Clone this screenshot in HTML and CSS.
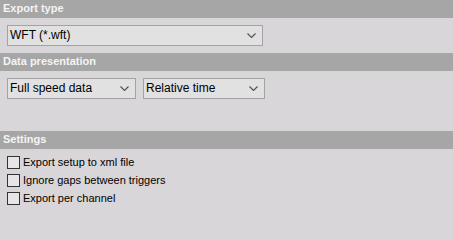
FILE: index.html
```html
<!DOCTYPE html>
<html>
<head>
<meta charset="utf-8">
<link rel="stylesheet" href="styles.css">
</head>
<body>
<div class="panel">
  <div class="hdr">Export type</div>
  <div class="sec sec1">
    <div class="sel w-wide"><span>WFT (*.wft)</span><svg class="chev" width="9" height="5" viewBox="0 0 9 5"><polyline points="0.5,0.5 4.5,4.5 8.5,0.5" fill="none" stroke="#505050" stroke-width="1.1"/></svg></div>
  </div>
  <div class="hdr">Data presentation</div>
  <div class="sec sec2">
    <div class="row">
      <div class="sel w-a"><span>Full speed data</span><svg class="chev" width="9" height="5" viewBox="0 0 9 5"><polyline points="0.5,0.5 4.5,4.5 8.5,0.5" fill="none" stroke="#505050" stroke-width="1.1"/></svg></div>
      <div class="sel w-b"><span>Relative time</span><svg class="chev" width="9" height="5" viewBox="0 0 9 5"><polyline points="0.5,0.5 4.5,4.5 8.5,0.5" fill="none" stroke="#505050" stroke-width="1.1"/></svg></div>
    </div>
  </div>
  <div class="hdr">Settings</div>
  <div class="sec sec3">
    <label class="chk"><span class="box"></span><span class="lbl">Export setup to xml file</span></label>
    <label class="chk"><span class="box"></span><span class="lbl">Ignore gaps between triggers</span></label>
    <label class="chk"><span class="box"></span><span class="lbl">Export per channel</span></label>
  </div>
</div>
</body>
</html>
```
FILE: styles.css
```css
html, body {
  margin: 0;
  padding: 0;
  background: #d8d6d8;
}
.panel {
  width: 453px;
  height: 206px;
  overflow: hidden;
  font-family: "Liberation Sans", Arial, sans-serif;
}
.hdr {
  height: 18px;
  line-height: 17px;
  background: #a6a6a6;
  color: #f4f4f4;
  font-weight: bold;
  font-size: 11px;
  padding-left: 3px;
}
.sec {
  box-sizing: border-box;
  padding-left: 7px;
}
.sec1 {
  height: 35px;
  padding-top: 7px;
}
.sec2 {
  height: 60px;
  padding-top: 7px;
}
.sec3 {
  padding-top: 7px;
  display: flex;
  flex-direction: column;
  gap: 5px;
}
.row {
  display: flex;
  gap: 7px;
}
.sel {
  box-sizing: border-box;
  height: 21px;
  border: 1px solid #a3a3a3;
  background: #e1e1e1;
  display: flex;
  align-items: center;
  justify-content: space-between;
  padding: 0 6px 0 2px;
  font-size: 12px;
  color: #000;
}
.sel span {
  line-height: 19px;
}
.chev {
  display: block;
}
.w-wide { width: 256px; }
.w-a { width: 129px; }
.w-b { width: 122px; }
.chk {
  display: flex;
  align-items: center;
  height: 13px;
  gap: 3px;
}
.box {
  box-sizing: border-box;
  width: 13px;
  height: 13px;
  border: 1px solid #333;
  background: #e6e6e6;
}
.lbl {
  font-size: 11px;
  color: #000;
  line-height: 13px;
}
```
